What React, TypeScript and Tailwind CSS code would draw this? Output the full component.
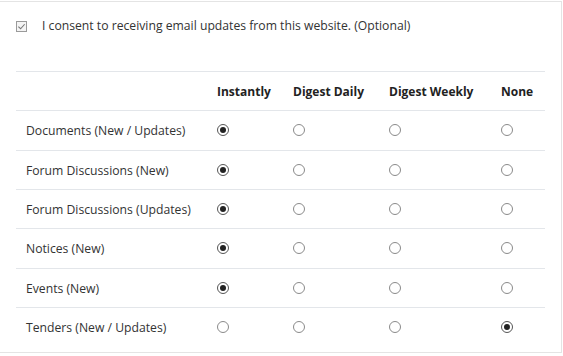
import React from 'react';

const columns = ['Instantly', 'Digest Daily', 'Digest Weekly', 'None'];

const rows = [
  { label: 'Documents (New / Updates)', selected: 0 },
  { label: 'Forum Discussions (New)', selected: 0 },
  { label: 'Forum Discussions (Updates)', selected: 0 },
  { label: 'Notices (New)', selected: 0 },
  { label: 'Events (New)', selected: 0 },
  { label: 'Tenders (New / Updates)', selected: 3 },
];

const Radio = ({ checked }: { checked: boolean }) =>
  checked ? (
    <span className="w-[12px] h-[12px] rounded-full border border-[#555] flex items-center justify-center">
      <span className="w-[6px] h-[6px] rounded-full bg-[#222]" />
    </span>
  ) : (
    <span className="w-[12px] h-[12px] rounded-full border border-[#8a8a8a] bg-white" />
  );

const rowGrid = 'grid grid-cols-[191px_76px_96px_112px_54px] h-[39.33px] border-t border-[#e3e6ea] items-center';

export default function App() {
  return (
    <div
      className="mt-px w-[562px] h-[352px] border-t border-r border-b border-[#e4e4e4] bg-white px-4 pt-[14px] text-[#333] text-[12.2px]"
      style={{ fontFamily: '"Open Sans", "Noto Sans", Arial, sans-serif' }}
    >
      {/* consent checkbox */}
      <div className="flex items-center h-5">
        <span className="w-[11px] h-[11px] border border-[#9a9a9a] bg-[#f4f4f4] flex items-center justify-center">
          <svg viewBox="0 0 10 10" className="w-[9px] h-[9px]">
            <path d="M1.5 5.2 L4 7.5 L8.5 2.5" fill="none" stroke="#777" strokeWidth="1.2" />
          </svg>
        </span>
        <span className="ml-[15px]">I consent to receiving email updates from this website. (Optional)</span>
      </div>

      {/* preferences table */}
      <div className="mt-[35px]">
        <div className={rowGrid}>
          <div />
          {columns.map((c) => (
            <div key={c} className="pl-[10px] pt-[2px] font-bold text-[#222] text-[12px]">
              {c}
            </div>
          ))}
        </div>
        {rows.map((r) => (
          <div key={r.label} className={rowGrid}>
            <div className="pl-[10px] pt-[2px]">{r.label}</div>
            {columns.map((c, i) => (
              <div key={c} className="pl-[10px] flex items-center">
                <Radio checked={i === r.selected} />
              </div>
            ))}
          </div>
        ))}
      </div>
    </div>
  );
}
